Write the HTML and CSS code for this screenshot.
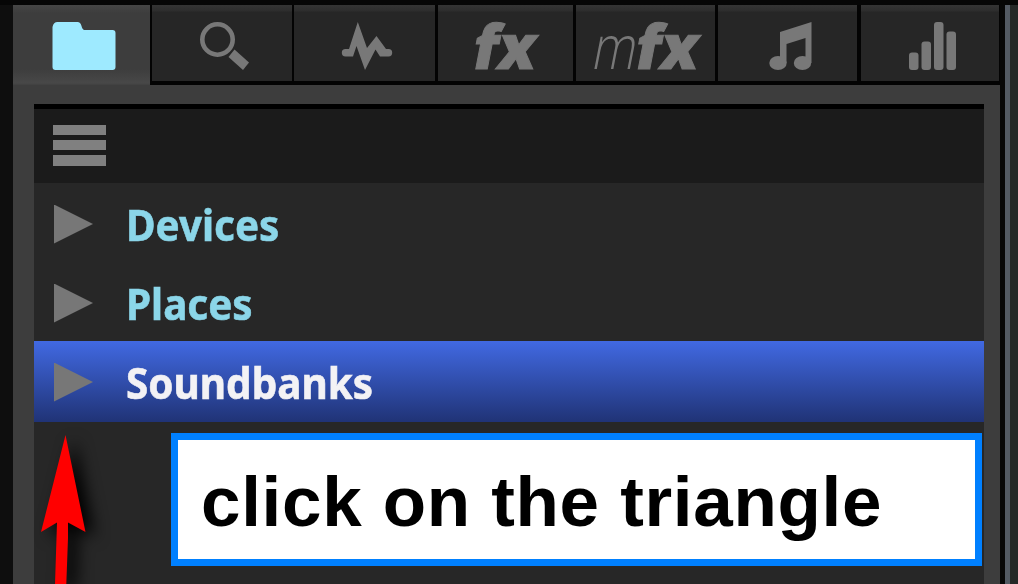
FILE: index.html
```html
<!DOCTYPE html>
<html lang="en">
<head>
  <meta charset="UTF-8">
  <meta name="viewport" content="width=device-width, initial-scale=1">
  <title>Browser panel</title>
  <link rel="stylesheet" href="styles.css">
</head>
<body>
  <div class="window">
    <div class="frame">
      <nav class="tabs">
        <div class="tab active">
          <svg viewBox="0 0 137 80"><path fill="#9eeaff" d="M39.500 22q1-5 5-5h20q3 0 4 4 1 4 3 4h28q3 0 3 3v34q0 3-3 3h-57q-3 0-3-3z"/></svg>
        </div>
        <div class="tab">
          <svg viewBox="0 0 140 76"><circle cx="65.500" cy="34.500" r="15.200" fill="none" stroke="#787878" stroke-width="4.600"/><path fill="#787878" d="M82.500 44.500 97 57.500 91 65 76.500 52z"/></svg>
        </div>
        <div class="tab">
          <svg viewBox="0 0 141 76"><path fill="#787878" d="M51.500 44H55L63.800 17 73 43 82.500 31 92 44h2.500a3.700 3.700 0 0 1 0 7.400H86l-4.500-6.800L71 65 62.500 41 59 51.400h-7.500a3.700 3.700 0 0 1 0-7.400z"/></svg>
        </div>
        <div class="tab wide">
          <svg viewBox="0 0 135 76"><text class="fx" transform="translate(32 64) skewX(-11)" textLength="63" lengthAdjust="spacingAndGlyphs">fx</text></svg>
        </div>
        <div class="tab wide">
          <svg viewBox="0 0 139 76"><text class="thin" transform="translate(14 64) skewX(-11)" textLength="44" lengthAdjust="spacingAndGlyphs">m</text><text class="fx" transform="translate(56.500 64) skewX(-11)" textLength="63" lengthAdjust="spacingAndGlyphs">fx</text></svg>
        </div>
        <div class="tab wide">
          <svg viewBox="0 0 139 76"><g fill="#787878"><path d="M62 27 93.500 17v41h-6V33L68.500 39v19h-6.500z"/><ellipse cx="60" cy="58" rx="8.700" ry="7"/><ellipse cx="84.500" cy="58" rx="8.700" ry="7"/></g></svg>
        </div>
        <div class="tab last">
          <svg viewBox="0 0 138 76"><g fill="#787878"><rect x="48" y="47.500" width="9.500" height="17.500" rx="3"/><rect x="60.500" y="36.500" width="9.500" height="28.500" rx="3"/><rect x="73" y="17" width="9.500" height="48" rx="3"/><rect x="85.500" y="26.500" width="9.500" height="38.500" rx="3"/></g></svg>
        </div>
      </nav>

      <main class="panel">
        <div class="toolbar">
          <div class="menu"><i></i><i></i><i></i></div>
        </div>
        <div class="row"><span class="triangle"></span><span class="label">Devices</span></div>
        <div class="row"><span class="triangle"></span><span class="label">Places</span></div>
        <div class="row selected"><span class="triangle"></span><span class="label">Soundbanks</span></div>
        <div class="hint">click on the triangle</div>
      </main>
    </div>
    <div class="divider"></div>
  </div>

  <svg class="arrow" viewBox="0 0 130 164"><path fill="#f00" d="M45.500 15 65.500 112 48 102.500V118L46.300 164H35l1.500-46 .5-15.500L21 112z"/></svg>
</body>
</html>
```

FILE: styles.css
```css
* {
  box-sizing: border-box;
}
body {
  margin: 0;
  width: 1018px;
  height: 584px;
  overflow: hidden;
  position: relative;
  background: #0e0e0e;
}
.window {
  display: flex;
  height: 584px;
  padding-left: 13px;
  border-top: 5px solid #060606;
}
.frame {
  width: 987px;
  background: #3d3d3d;
}

/* tabs */
.tabs {
  display: grid;
  grid-template-columns: 137px 142px 143px 138px 142px 142px 142px;
  height: 80px;
  background: #030303;
}
.tab {
  height: 76px;
  margin-left: 2px;
  background: linear-gradient(#343434, #2d2d2d 6px, #262626 7px);
}
.tab.wide {
  margin-left: 3px;
}
.tab.last {
  margin-left: 4px;
}
.tab.active {
  height: 80px;
  margin-left: 0;
  background: linear-gradient(#464646, #3d3d3d 8px, #3d3d3d 64px, #484848 78px, #404040);
}
.tab svg {
  display: block;
  width: 100%;
  height: 100%;
  overflow: visible;
}
.fx,
.thin {
  font-family: "Open Sans", "Noto Sans", sans-serif;
  font-size: 61px;
  font-weight: 800;
  fill: #787878;
}
.fx {
  stroke: #787878;
  stroke-width: 1px;
}
.thin {
  font-weight: 300;
}

/* browser list */
.panel {
  width: 950px;
  height: 480px;
  margin: 19px 0 0 21px;
  background: #272727;
  border-top: 5px solid #000;
}
.toolbar {
  height: 74px;
  padding: 16px 19px;
  background: #1b1b1b;
}
.menu {
  display: grid;
  grid-template-rows: 10px 10px 11px;
  gap: 5px;
  width: 53px;
}
.menu i {
  background: #808080;
}
.row {
  display: flex;
  align-items: center;
  gap: 33px;
  height: 79px;
  padding-left: 20px;
  color: #8bd6e9;
}
.row.selected {
  height: 81px;
  padding-bottom: 2px;
  background: linear-gradient(#4169e2, #203376);
  color: #f3f2f5;
}
.triangle {
  width: 39px;
  height: 39px;
  margin-top: 3px;
  background: #777;
  clip-path: polygon(0 0, 100% 50%, 0 100%);
}
.label {
  font: bold 43px/60px "Noto Sans", "Open Sans", sans-serif;
  padding-top: 4px;
  transform: scaleX(.94);
  transform-origin: left;
  -webkit-text-stroke: .6px currentColor;
}

.hint {
  width: 811px;
  height: 133px;
  margin: 11px 0 0 137px;
  padding-left: 23px;
  border: 7px solid #0080ff;
  background: #fff;
  color: #000;
  font: bold 71px/124px "Liberation Sans", Arial, sans-serif;
  letter-spacing: .68px;
  white-space: nowrap;
}

.divider {
  width: 18px;
  background: linear-gradient(90deg, #070707 5px, #535a63 5px, #535a63 10px, #252827 10px);
}

/* pointer over the list */
.arrow {
  position: absolute;
  left: 20px;
  top: 420px;
  width: 130px;
  height: 164px;
  filter: drop-shadow(9px 5px 8px #000);
}
```
